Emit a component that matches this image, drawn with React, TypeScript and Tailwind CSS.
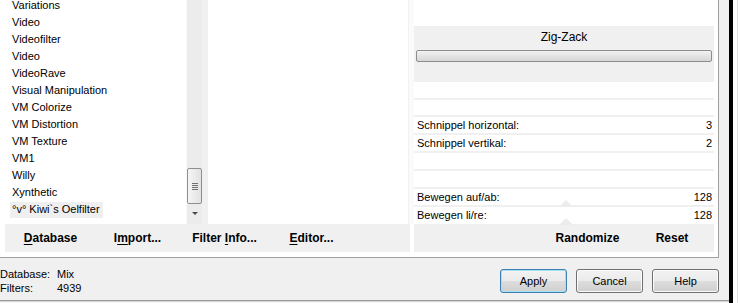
const filters = [
  "Variations",
  "Video",
  "Videofilter",
  "Video",
  "VideoRave",
  "Visual Manipulation",
  "VM Colorize",
  "VM Distortion",
  "VM Texture",
  "VM1",
  "Willy",
  "Xynthetic",
  "°v° Kiwi`s Oelfilter",
];

const btnGradient =
  "bg-[linear-gradient(to_bottom,#f2f2f2_0%,#ebebeb_48%,#dddddd_52%,#cfcfcf_100%)]";

const Sep = () => <div className="h-[2px] w-[300px] bg-[#f0f0f0]"></div>;

const ParamRow = ({ label, value, thumb }: { label: string; value: string; thumb?: boolean }) => (
  <div className="relative flex h-[16px] w-[300px] items-center justify-between pl-[3px] pr-[2px]">
    <span>{label}</span>
    <span>{value}</span>
    {thumb && (
      <div className="absolute bottom-[-2px] left-[145px] h-0 w-0 border-x-[7px] border-b-[7px] border-x-transparent border-b-[#ececec]"></div>
    )}
  </div>
);

const FilterList = () => (
  <div className="h-[224px] w-[186px] overflow-hidden bg-white">
    <div className="mt-[-3px]">
      {filters.map((f, i) => (
        <div key={i} className="flex h-[17px] items-center pl-[10px]">
          <span
            className={
              "flex h-[16px] items-center px-[2px] " +
              (i === filters.length - 1 ? "bg-[#efefef] pr-[3px]" : "")
            }
          >
            {f}
          </span>
        </div>
      ))}
    </div>
  </div>
);

const ScrollBar = () => (
  <div className="flex h-[224px] w-[16px] flex-col border-l border-[#f8f8f8] bg-[#ececec]">
    <div className="h-[168px]"></div>
    <div className="flex h-[36px] w-[15px] flex-col items-center justify-center gap-[1px] rounded-[2px] border border-[#8f8f8f] bg-[linear-gradient(to_right,#f5f5f5,#e2e2e2)]">
      <div className="h-px w-[6px] bg-[#6f6f6f]"></div>
      <div className="h-px w-[6px] bg-[#6f6f6f]"></div>
      <div className="h-px w-[6px] bg-[#6f6f6f]"></div>
      <div className="h-px w-[6px] bg-[#6f6f6f]"></div>
    </div>
    <div className="flex h-[18px] items-center justify-center">
      <div className="h-0 w-0 border-x-[3px] border-t-[3px] border-x-transparent border-t-[#4a4a4a]"></div>
    </div>
  </div>
);

const ParamPanel = () => (
  <div className="flex h-[224px] w-[304px] flex-col bg-white">
    <div className="h-[26px]"></div>
    <div className="flex h-[56px] w-[300px] flex-col bg-[#f0f0f0]">
      <div className="flex h-[22px] items-center justify-center text-[12px]">Zig-Zack</div>
      <div className="mx-[2px] mt-[2px] h-[12px] rounded-[2px] border border-[#8e8e8e] bg-[linear-gradient(to_bottom,#f2f2f2,#d6d6d6)]"></div>
    </div>
    <div className="h-[16px]"></div>
    <Sep />
    <div className="h-[15px]"></div>
    <Sep />
    <ParamRow label="Schnippel horizontal:" value="3" />
    <Sep />
    <ParamRow label="Schnippel vertikal:" value="2" />
    <Sep />
    <div className="h-[16px]"></div>
    <Sep />
    <div className="h-[16px]"></div>
    <Sep />
    <ParamRow label="Bewegen auf/ab:" value="128" thumb />
    <Sep />
    <ParamRow label="Bewegen li/re:" value="128" thumb />
  </div>
);

const BandButton = ({ children, w }: { children: React.ReactNode; w: string }) => (
  <div className={"flex h-full items-center justify-center font-bold text-[12px] " + w}>
    <span>{children}</span>
  </div>
);

const DialogButton = ({ label, primary }: { label: string; primary?: boolean }) => (
  <div
    className={
      "flex h-[24px] w-[67px] items-center justify-center rounded-[3px] border " +
      btnGradient +
      (primary
        ? " border-[#3c7fb1] shadow-[inset_0_0_0_1px_#a6e0f5]"
        : " border-[#707070] shadow-[inset_0_0_0_1px_#fbfbfb]")
    }
  >
    {label}
  </div>
);

export default function App() {
  return (
    <div className="flex h-[303px] w-[741px] overflow-hidden bg-[#f0f0f0] font-['Liberation_Sans',Arial,sans-serif] text-[11px] leading-none text-black">
      <div className="flex w-[729px] flex-col">
        <div className="flex h-[258px] w-[719px] flex-col border-b border-r border-[#a0a0a0] bg-white">
          <div className="flex h-[224px]">
            <FilterList />
            <ScrollBar />
            <div className="w-[6px] bg-[#f0f0f0]"></div>
            <div className="w-[201px] border-r border-[#f2f2f2] bg-white"></div>
            <div className="w-[5px] bg-[#fbfbfb]"></div>
            <ParamPanel />
          </div>
          <div className="flex h-[28px] pl-[5px]">
            <div className="flex w-[405px] bg-[#f0f0f0] pl-[2px]">
              <BandButton w="w-[87px]">
                <u className="underline-offset-2">D</u>atabase
              </BandButton>
              <BandButton w="w-[87px]">
                I<u className="underline-offset-2">m</u>port...
              </BandButton>
              <BandButton w="w-[87px]">
                Filter <u className="underline-offset-2">I</u>nfo...
              </BandButton>
              <BandButton w="w-[87px]">
                <u className="underline-offset-2">E</u>ditor...
              </BandButton>
            </div>
            <div className="w-[4px]"></div>
            <div className="flex w-[300px] justify-end bg-[#f0f0f0]">
              <BandButton w="w-[85px]">Randomize</BandButton>
              <BandButton w="w-[84px]">Reset</BandButton>
            </div>
          </div>
        </div>
        <div className="flex h-[42px] items-start justify-between pr-[10px]">
          <div className="grid grid-cols-[57px_auto] pt-[9px] leading-[14px]">
            <span>Database:</span>
            <span>Mix</span>
            <span>Filters:</span>
            <span>4939</span>
          </div>
          <div className="flex gap-[9px] pt-[11px]">
            <DialogButton label="Apply" primary />
            <DialogButton label="Cancel" />
            <DialogButton label="Help" />
          </div>
        </div>
        <div className="h-[1px] bg-[#9a9a9a]"></div>
        <div className="h-[1px] bg-[#d8d8d8]"></div>
        <div className="flex-1 bg-[#f7f7f7]"></div>
      </div>
      <div className="w-[4px] bg-black"></div>
      <div className="flex w-[8px] bg-white">
        <div className="w-[4px]"></div>
        <div className="w-px bg-[#d6e3f2]"></div>
      </div>
    </div>
  );
}
